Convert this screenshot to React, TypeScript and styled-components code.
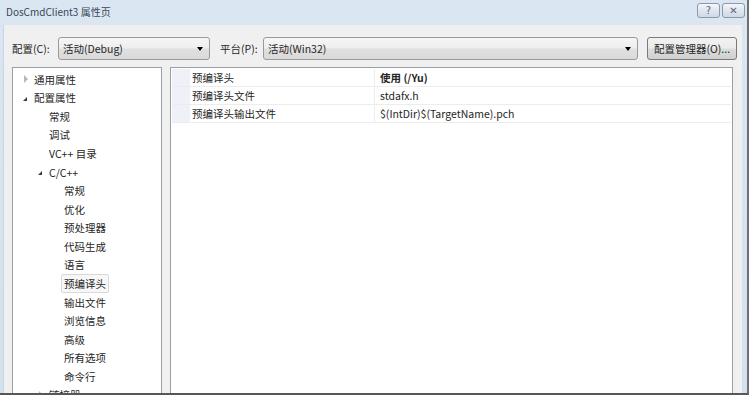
import React from "react";
import styled, { createGlobalStyle } from "styled-components";

const Global = createGlobalStyle`
  html, body { margin: 0; padding: 0; background: #ffffff; }
  body { font-family: "Segoe UI", "Noto Sans CJK SC", "Noto Sans", sans-serif; font-size: 10px; color: #262626; }
`;

const Shadow = styled.div`
  width: 751px;
  height: 398px;
  overflow: hidden;
  background: #ffffff;
`;

const Frame = styled.div`
  width: 749px;
  height: 395px;
  box-sizing: border-box;
  border-right: 2px solid #6d6f72;
  border-bottom: 2px solid #55575a;
  background: linear-gradient(180deg, #dbe6f3 0%, #d3e0ee 100%);
  display: flex;
  flex-direction: column;
  padding: 0 5px 0 3px;
`;

const TitleBar = styled.div`
  height: 25px;
  flex: none;
  display: flex;
  align-items: center;
  justify-content: space-between;
  padding-left: 3px;
`;

const Title = styled.div`
  font-size: 10px;
  color: #3a4656;
  margin-top: -2px;
`;

const TitleButtons = styled.div`
  display: flex;
  gap: 2px;
  margin-top: -4px;
  margin-right: -3px;
`;

const CapButton = styled.div`
  width: 23px;
  height: 15px;
  border: 1px solid #8d99a8;
  border-radius: 3px;
  background: linear-gradient(180deg, #f4f7fb 0%, #dfe6ef 50%, #d0d9e4 100%);
  display: flex;
  align-items: center;
  justify-content: center;
  box-sizing: border-box;
  color: #5d6675;
  font-size: 10px;
  font-family: "DejaVu Sans", sans-serif;
  line-height: 1;
`;

const Client = styled.div`
  flex: 1;
  background: #f0f0f0;
  border-left: 1px solid #c9d5e3;
  display: flex;
  flex-direction: column;
  padding: 12px 3px 0 8px;
  min-height: 0;
`;

const ConfigRow = styled.div`
  display: flex;
  align-items: center;
  height: 23px;
`;

const Label = styled.div<{ $w: number }>`
  width: ${(p) => p.$w}px;
  flex: none;
  font-size: 10.5px;
`;

const Combo = styled.div<{ $w: number; $mr: number }>`
  width: ${(p) => p.$w}px;
  margin-right: ${(p) => p.$mr}px;
  height: 23px;
  box-sizing: border-box;
  border: 1px solid #9a9a9a;
  border-radius: 3px;
  background: linear-gradient(180deg, #f6f6f6 0%, #eeeeee 48%, #e0e0e0 52%, #dadada 100%);
  display: flex;
  align-items: center;
  padding: 0 6px 0 4px;
  font-size: 10.5px;
  flex: none;
`;

const ComboText = styled.span`
  flex: 1;
`;

const Arrow = styled.span`
  width: 0;
  height: 0;
  border-left: 3px solid transparent;
  border-right: 3px solid transparent;
  border-top: 4px solid #000;
`;

const Button = styled.div`
  width: 90px;
  height: 23px;
  box-sizing: border-box;
  border: 1px solid #7a7a7a;
  border-radius: 3px;
  background: linear-gradient(180deg, #f2f2f2 0%, #ebebeb 48%, #dddddd 52%, #cfcfcf 100%);
  display: flex;
  align-items: center;
  justify-content: center;
  font-size: 10.5px;
  flex: none;
`;

const Panes = styled.div`
  flex: 1;
  display: flex;
  gap: 8px;
  margin-top: 7px;
  min-height: 0;
`;

const Tree = styled.div`
  width: 150px;
  flex: none;
  background: #fff;
  border: 1px solid #9a9ea5;
  border-bottom: none;
  box-sizing: border-box;
  padding-top: 2px;
  overflow: hidden;
`;

const TreeItem = styled.div<{ $indent: number }>`
  height: 18.57px;
  display: flex;
  align-items: center;
  padding-left: ${(p) => p.$indent}px;
  font-size: 10.5px;
  white-space: nowrap;
`;

const Toggle = styled.span<{ $open: boolean }>`
  width: 11px;
  flex: none;
  display: flex;
  align-items: center;
  & > span {
    display: block;
    width: 0;
    height: 0;
    ${(p) =>
      p.$open
        ? `border-left: 4px solid transparent; border-bottom: 4px solid #3c3c3c; margin-top: 2px;`
        : `border-top: 4px solid transparent; border-bottom: 4px solid transparent; border-left: 4px solid #b8b8b8; margin-left: 1px;`}
  }
`;

const ItemText = styled.span<{ $sel?: boolean }>`
  padding: 1px 2px;
  border: 1px solid ${(p) => (p.$sel ? "#d9d9d9" : "transparent")};
  border-radius: 2px;
  background: ${(p) => (p.$sel ? "#f7f7f7" : "transparent")};
  margin-left: -3px;
`;

const Grid = styled.div`
  flex: 1;
  background: #fff;
  border: 1px solid #9a9ea5;
  border-bottom: none;
  box-sizing: border-box;
  padding: 1px 1px 0 1px;
  margin-right: 6px;
`;

const Row = styled.div`
  display: grid;
  grid-template-columns: 203px 1fr;
  height: 18px;
  border-bottom: 1px solid #ececec;
  box-sizing: border-box;
`;

const NameCell = styled.div`
  display: flex;
  align-items: center;
  padding-left: 20px;
  background: linear-gradient(90deg, #eef2f8 0, #eef2f8 18px, #ffffff 18px);
  border-right: 1px solid #ececec;
  font-size: 10.5px;
`;

const ValueCell = styled.div<{ $bold?: boolean }>`
  display: flex;
  align-items: center;
  padding-left: 5px;
  font-size: 10.5px;
  font-weight: ${(p) => (p.$bold ? 700 : 400)};
`;

const treeItems: { text: string; indent: number; toggle?: "open" | "closed"; sel?: boolean }[] = [
  { text: "通用属性", indent: 10, toggle: "closed" },
  { text: "配置属性", indent: 10, toggle: "open" },
  { text: "常规", indent: 36 },
  { text: "调试", indent: 36 },
  { text: "VC++ 目录", indent: 36 },
  { text: "C/C++", indent: 25, toggle: "open" },
  { text: "常规", indent: 51 },
  { text: "优化", indent: 51 },
  { text: "预处理器", indent: 51 },
  { text: "代码生成", indent: 51 },
  { text: "语言", indent: 51 },
  { text: "预编译头", indent: 51, sel: true },
  { text: "输出文件", indent: 51 },
  { text: "浏览信息", indent: 51 },
  { text: "高级", indent: 51 },
  { text: "所有选项", indent: 51 },
  { text: "命令行", indent: 51 },
  { text: "链接器", indent: 25, toggle: "closed" },
];

const rows = [
  { name: "预编译头", value: "使用 (/Yu)", bold: true },
  { name: "预编译头文件", value: "stdafx.h" },
  { name: "预编译头输出文件", value: "$(IntDir)$(TargetName).pch" },
];

export default function App() {
  return (
    <Shadow>
      <Global />
      <Frame>
        <TitleBar>
          <Title>DosCmdClient3 属性页</Title>
          <TitleButtons>
            <CapButton>?</CapButton>
            <CapButton>✕</CapButton>
          </TitleButtons>
        </TitleBar>
        <Client>
          <ConfigRow>
            <Label $w={46}>配置(C):</Label>
            <Combo $w={152} $mr={10}>
              <ComboText>活动(Debug)</ComboText>
              <Arrow />
            </Combo>
            <Label $w={43}>平台(P):</Label>
            <Combo $w={375} $mr={9}>
              <ComboText>活动(Win32)</ComboText>
              <Arrow />
            </Combo>
            <Button>配置管理器(O)...</Button>
          </ConfigRow>
          <Panes>
            <Tree>
              {treeItems.map((it, i) => (
                <TreeItem key={i} $indent={it.indent}>
                  {it.toggle ? (
                    <Toggle $open={it.toggle === "open"}>
                      <span />
                    </Toggle>
                  ) : null}
                  <ItemText $sel={it.sel}>{it.text}</ItemText>
                </TreeItem>
              ))}
            </Tree>
            <Grid>
              {rows.map((r, i) => (
                <Row key={i}>
                  <NameCell>{r.name}</NameCell>
                  <ValueCell $bold={r.bold}>{r.value}</ValueCell>
                </Row>
              ))}
            </Grid>
          </Panes>
        </Client>
      </Frame>
    </Shadow>
  );
}
